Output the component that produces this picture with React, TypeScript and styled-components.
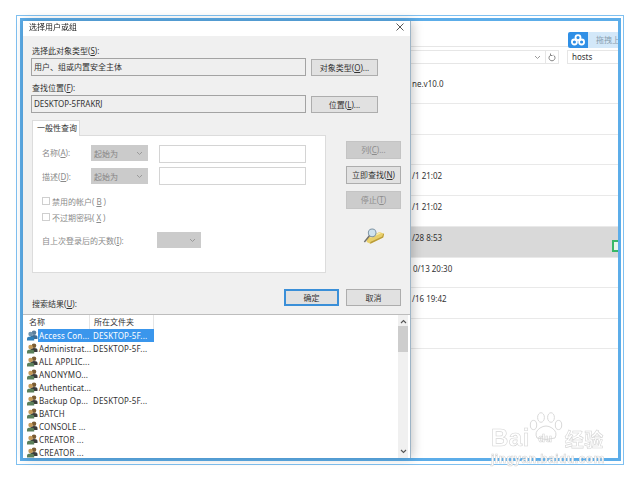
import styled, { createGlobalStyle } from "styled-components";

const GlobalStyle = createGlobalStyle`
  * { box-sizing: border-box; }
  html, body { margin: 0; background: #fff; }
  body {
    width: 640px;
    height: 480px;
    overflow: hidden;
    font-family: "Noto Sans", "Noto Sans CJK SC", sans-serif;
    font-size: 8px;
    color: #333;
  }
`;

const Page = styled.div`
  position: relative;
  width: 640px;
  height: 480px;
  padding: 15px 16px;
  filter: blur(0.4px);
`;
const OuterFrame = styled.div`
  width: 608px;
  height: 450px;
  padding: 2px 2px 3px 3px;
  border: 1px solid #7fc0f0;
`;
const InnerFrame = styled.div`
  display: flex;
  height: 100%;
  border: 3px solid #5cade9;
`;

const Dialog = styled.div`
  position: relative;
  z-index: 1;
  display: flex;
  flex-direction: column;
  flex: none;
  width: 388px;
  background: #fff;
  border-right: 1px solid #9db4c6;
  box-shadow: 2px 0 10px rgba(0, 0, 0, 0.22);
`;
const TitleBar = styled.div`
  display: flex;
  align-items: center;
  justify-content: space-between;
  height: 15px;
  padding: 0 6px 3px;
  line-height: 12px;
  color: #222;
`;
const DialogBody = styled.div`
  height: 278px;
  padding: 9px 0 0 8px;
  background: #f0f0f0;
`;
const FieldLabel = styled.div`
  height: 13px;
  padding-left: 1px;
  line-height: 12px;
`;
const FieldRow = styled.div`
  display: flex;
  align-items: flex-end;
  gap: 5px;
  margin-bottom: 6px;
`;
const Field = styled.div`
  width: 275px;
  height: 18px;
  padding: 1px 0 0 2px;
  line-height: 13px;
  background: #efefef;
  border: 1px solid #a3a3a3;
`;
const Btn = styled.div<{ $w: number; $off?: boolean; $primary?: boolean; $tall?: boolean }>`
  flex: none;
  width: ${(p) => p.$w}px;
  height: ${(p) => (p.$off || p.$tall ? 18 : 17)}px;
  line-height: ${(p) => (p.$primary ? 13 : 15)}px;
  text-align: center;
  color: ${(p) => (p.$off ? "#8c8c8c" : "#333")};
  background: ${(p) => (p.$off ? "#cccccc" : "#e1e1e1")};
  border: ${(p) => (p.$primary ? 2 : 1)}px solid
    ${(p) => (p.$primary ? "#3a8fd8" : p.$off ? "#c4c4c4" : "#adadad")};
`;

const QueryRow = styled.div`
  display: flex;
  gap: 20px;
  margin: 7px 0 0 1px;
`;
const Tab = styled.div`
  position: relative;
  z-index: 1;
  width: 48px;
  height: 16px;
  margin-bottom: -1px;
  padding-left: 4px;
  line-height: 13px;
  white-space: nowrap;
  background: #fff;
  border: 1px solid #dcdcdc;
  border-bottom: none;
`;
const Panel = styled.div`
  width: 294px;
  height: 138px;
  padding: 9px 0 0 9px;
  color: #8a8a8a;
  background: #fff;
  border: 1px solid #dcdcdc;
`;
const QueryLine = styled.div<{ $topAligned?: boolean }>`
  display: flex;
  align-items: ${(p) => (p.$topAligned ? "flex-start" : "center")};
  height: 18px;
  margin-bottom: 4px;
  line-height: ${(p) => (p.$topAligned ? "15px" : "normal")};
`;
const LineLabel = styled.span<{ $w: number }>`
  flex: none;
  width: ${(p) => p.$w}px;
`;
const Combo = styled.div<{ $w: number }>`
  display: flex;
  align-items: center;
  justify-content: space-between;
  flex: none;
  width: ${(p) => p.$w}px;
  height: 16px;
  padding: 0 5px 0 3px;
  color: #858585;
  background: #cbcbcb;
`;
const TextInput = styled.div`
  width: 147px;
  height: 18px;
  margin-left: 11px;
  background: #fff;
  border: 1px solid #d4d4d4;
`;
const CheckLine = styled.div<{ $top: number }>`
  display: flex;
  align-items: center;
  gap: 2px;
  height: 12px;
  margin-top: ${(p) => p.$top}px;
`;
const CheckBox = styled.span`
  width: 8px;
  height: 8px;
  background: #fff;
  border: 1px solid #cfcfcf;
`;
const DaysLine = styled(QueryLine)`
  height: 16px;
  margin-top: 9px;
`;
const SideButtons = styled.div`
  display: flex;
  flex-direction: column;
  align-items: center;
  gap: 7px;
  margin-top: 21px;
`;
const FindIcon = styled.svg`
  margin-top: 12px;
`;
const Actions = styled.div`
  display: flex;
  height: 22px;
  gap: 7px;
  margin-top: 16px;
  padding-right: 9px;
`;
const ResultsLabel = styled(FieldLabel)`
  align-self: flex-end;
  margin-right: auto;
`;

const Results = styled.div`
  position: relative;
  flex: 1;
  padding-left: 4px;
  overflow: hidden;
  background: #fff;
  border-top: 1px solid #bdbdbd;
`;
const ResultsHead = styled.div`
  display: flex;
  height: 14px;
  margin-left: -2px;
  line-height: 14px;
`;
const HeadCell = styled.div<{ $w: number }>`
  width: ${(p) => p.$w}px;
  padding-left: 4px;
  border-right: 1px solid #e5e5e5;
`;
const ResultRow = styled.div`
  display: flex;
  align-items: center;
  height: 13px;
  letter-spacing: 0.15px;
  white-space: nowrap;
`;
const RowCells = styled.div<{ $on?: boolean }>`
  display: flex;
  width: 116px;
  height: 13px;
  line-height: 13px;
  color: ${(p) => (p.$on ? "#fff" : "#333")};
  background: ${(p) => (p.$on ? "#3a96ec" : "transparent")};
`;
const NameCell = styled.span`
  width: 55px;
  padding-left: 1px;
`;
const ScrollBar = styled.div`
  position: absolute;
  top: 0;
  right: 2px;
  bottom: 0;
  display: flex;
  flex-direction: column;
  justify-content: space-between;
  align-items: center;
  width: 10px;
  padding: 4px 0;
  background: #f0f0f0;
`;
const Thumb = styled.div`
  position: absolute;
  top: 11px;
  left: 0;
  width: 10px;
  height: 26px;
  background: #cdcdcd;
`;

const Explorer = styled.div`
  flex: 1;
  background: #fff;
`;
const ExplorerTop = styled.div`
  display: flex;
  justify-content: flex-end;
  align-items: flex-end;
  height: 26px;
  border-bottom: 1px solid #e6e6e6;
`;
const CloudBadge = styled.div`
  position: relative;
  display: flex;
  width: 50px;
  height: 16px;
  margin-bottom: -2px;
`;
const CloudIcon = styled.div`
  display: flex;
  align-items: center;
  justify-content: center;
  width: 20px;
  background: #2f8fe6;
  border-radius: 2px 0 0 2px;
`;
const CloudText = styled.div`
  flex: 1;
  padding-left: 8px;
  overflow: hidden;
  line-height: 16px;
  white-space: nowrap;
  color: #8aa0b0;
  background: #d3e8f9;
`;
const AddressRow = styled.div`
  display: flex;
  height: 18px;
  padding-top: 3px;
  gap: 8px;
`;
const AddressBar = styled.div`
  display: flex;
  justify-content: flex-end;
  align-items: center;
  gap: 4px;
  width: 148px;
  height: 14px;
  border: 1px solid #e6e6e6;
  border-left: none;
`;
const AddressBtn = styled.span`
  display: flex;
  align-items: center;
  justify-content: center;
  width: 13px;
  height: 12px;
  border-left: 1px solid #e6e6e6;
`;
const SearchBox = styled.div`
  flex: 1;
  height: 14px;
  padding-left: 4px;
  line-height: 12px;
  border: 1px solid #e6e6e6;
  border-right: none;
`;
const FileRow = styled.div<{ $h: number; $on?: boolean; $indent?: number; $first?: boolean }>`
  display: flex;
  justify-content: space-between;
  height: ${(p) => p.$h}px;
  padding: ${(p) => (p.$first ? 12 : 4)}px 0 0 ${(p) => p.$indent ?? 1}px;
  line-height: 13px;
  background: ${(p) => (p.$on ? "#d9d9d9" : "#fff")};
  border-bottom: 1px solid #e9e9e9;
`;
const SheetBadge = styled.span`
  align-self: flex-end;
  width: 6px;
  height: 12px;
  margin-bottom: 5px;
  background: #e8f6ec;
  border: 2px solid #38b868;
  border-right: none;
`;

const Watermark = styled.div`
  position: absolute;
  left: 491px;
  top: 420px;
  width: 125px;
  color: #fff;
  -webkit-text-stroke: 0.6px #d5d5d5;
  font-family: "Liberation Sans", sans-serif;
`;
const MarkLine = styled.div`
  display: flex;
  align-items: center;
  height: 36px;
  font-size: 24px;
  font-weight: 700;
  letter-spacing: 0.5px;
`;
const MarkDu = styled.span`
  width: 31px;
  font-size: 11px;
  text-align: center;
`;
const MarkCn = styled.span`
  margin-left: 4px;
  font-family: "Noto Sans CJK SC", sans-serif;
  font-size: 19px;
`;
const MarkUrl = styled.div`
  margin-top: -4px;
  font-size: 12px;
  font-weight: 700;
  letter-spacing: 0.5px;
  white-space: nowrap;
`;
const Paw = styled.svg`
  position: absolute;
  left: 38px;
  top: -8px;
`;

const Chevron = () => (
  <svg width="7" height="5" viewBox="0 0 7 5" fill="none" stroke="#9a9a9a" strokeWidth="1">
    <path d="M1 1l2.5 2.5L6 1" />
  </svg>
);

const ScrollArrow = ({ up }: { up?: boolean }) => (
  <svg width="7" height="5" viewBox="0 0 7 5" fill="none" stroke="#555" strokeWidth="1.1">
    <path d={up ? "M1 4l2.5-2.5L6 4" : "M1 1l2.5 2.5L6 1"} />
  </svg>
);

const GroupIcon = ({ blue }: { blue?: boolean }) => (
  <svg width="11" height="11" viewBox="0 0 11 11" style={{ flex: "none" }}>
    <circle cx="7" cy="2.8" r="2.3" fill={blue ? "#5c7f9c" : "#7a5c34"} />
    <path d="M3.5 9V7q0-2 3.5-2t3.5 2v2z" fill={blue ? "#3f6d94" : "#3a3a3a"} />
    <circle cx="3.6" cy="4" r="2.3" fill={blue ? "#6f94b0" : "#c49a5a"} />
    <path d="M0 10.5V8.6q0-2.2 3.6-2.2t3.6 2.2v1.9z" fill={blue ? "#2f7fb8" : "#5b7f5a"} />
  </svg>
);

const rows = [
  { name: "Access Con...", folder: "DESKTOP-5F...", on: true },
  { name: "Administrat...", folder: "DESKTOP-5F..." },
  { name: "ALL APPLIC..." },
  { name: "ANONYMO..." },
  { name: "Authenticat..." },
  { name: "Backup Op...", folder: "DESKTOP-5F..." },
  { name: "BATCH" },
  { name: "CONSOLE ..." },
  { name: "CREATOR ..." },
  { name: "CREATOR ..." },
];

const files = [
  { h: 39, text: "ne.v10.0", first: true },
  { h: 31, text: "" },
  { h: 30, text: "" },
  { h: 31, text: "/1 21:02" },
  { h: 31, text: "/1 21:02" },
  { h: 31, text: "/28 8:53", on: true },
  { h: 30, text: "0/13 20:30", indent: 2 },
  { h: 31, text: "/16 19:42" },
  { h: 30, text: "" },
];

export default function App() {
  return (
    <Page>
      <GlobalStyle />
      <OuterFrame>
        <InnerFrame>
          <Dialog>
            <TitleBar>
              <span>选择用户或组</span>
              <svg width="8" height="8" viewBox="0 0 8 8" stroke="#444" strokeWidth="0.9">
                <path d="M0.5 0.5l7 7M7.5 0.5l-7 7" />
              </svg>
            </TitleBar>
            <DialogBody>
              <FieldLabel>选择此对象类型(<u>S</u>):</FieldLabel>
              <FieldRow>
                <Field>用户、组或内置安全主体</Field>
                <Btn $w={67}>对象类型(<u>O</u>)...</Btn>
              </FieldRow>
              <FieldLabel>查找位置(<u>F</u>):</FieldLabel>
              <FieldRow>
                <Field>DESKTOP-5FRAKRJ</Field>
                <Btn $w={67}>位置(<u>L</u>)...</Btn>
              </FieldRow>
              <QueryRow>
                <div>
                  <Tab>一般性查询</Tab>
                  <Panel>
                    <QueryLine $topAligned>
                      <LineLabel $w={49}>名称(<u>A</u>):</LineLabel>
                      <Combo $w={57}>起始为<Chevron /></Combo>
                      <TextInput />
                    </QueryLine>
                    <QueryLine>
                      <LineLabel $w={49}>描述(<u>D</u>):</LineLabel>
                      <Combo $w={57}>起始为<Chevron /></Combo>
                      <TextInput />
                    </QueryLine>
                    <CheckLine $top={10}><CheckBox />禁用的帐户(<u>B</u>)</CheckLine>
                    <CheckLine $top={4}><CheckBox />不过期密码(<u>X</u>)</CheckLine>
                    <DaysLine>
                      <LineLabel $w={115}>自上次登录后的天数(<u>I</u>):</LineLabel>
                      <Combo $w={44}><span /><Chevron /></Combo>
                    </DaysLine>
                  </Panel>
                </div>
                <SideButtons>
                  <Btn $w={55} $off>列(<u>C</u>)...</Btn>
                  <Btn $w={55} $tall>立即查找(<u>N</u>)</Btn>
                  <Btn $w={55} $off>停止(<u>T</u>)</Btn>
                  <FindIcon width="22" height="17" viewBox="0 0 24 18">
                    <path d="M4 11l14-7 5 2-1 4-14 7-4-2z" fill="#e8cf6a" />
                    <path d="M8 17l14-7 1-4-1 0-1 3-13 6z" fill="#b89a3a" />
                    <path d="M8 10l11-5" stroke="#f7eaa8" strokeWidth="1.5" />
                    <circle cx="10" cy="5" r="4.2" fill="#cfe3ee" stroke="#7d93a3" strokeWidth="1.1" />
                    <path d="M7 8.2L1.5 15" stroke="#6f6f6f" strokeWidth="1.5" />
                  </FindIcon>
                </SideButtons>
              </QueryRow>
              <Actions>
                <ResultsLabel>搜索结果(<u>U</u>):</ResultsLabel>
                <Btn $w={55} $primary>确定</Btn>
                <Btn $w={55}>取消</Btn>
              </Actions>
            </DialogBody>
            <Results>
              <ResultsHead>
                <HeadCell $w={65}>名称</HeadCell>
                <HeadCell $w={64}>所在文件夹</HeadCell>
              </ResultsHead>
              {rows.map((row, i) => (
                <ResultRow key={i}>
                  <GroupIcon blue={row.on} />
                  <RowCells $on={row.on}>
                    <NameCell>{row.name}</NameCell>
                    <span>{row.folder}</span>
                  </RowCells>
                </ResultRow>
              ))}
              <ScrollBar>
                <ScrollArrow up />
                <Thumb />
                <ScrollArrow />
              </ScrollBar>
            </Results>
          </Dialog>
          <Explorer>
            <ExplorerTop>
              <CloudBadge>
                <CloudIcon>
                  <svg width="14" height="12" viewBox="0 0 14 12" fill="none" stroke="#fff" strokeWidth="1.8">
                    <circle cx="7" cy="3.6" r="2.5" />
                    <circle cx="3.4" cy="8" r="2.5" />
                    <circle cx="10.6" cy="8" r="2.5" />
                  </svg>
                </CloudIcon>
                <CloudText>拖拽上</CloudText>
              </CloudBadge>
            </ExplorerTop>
            <AddressRow>
              <AddressBar>
                <Chevron />
                <AddressBtn>
                  <svg width="8" height="9" viewBox="0 0 8 9" fill="none" stroke="#777" strokeWidth="0.9">
                    <path d="M5.5 2.2a3 3 0 1 1-3 0M2.5 0.5v2h2" />
                  </svg>
                </AddressBtn>
              </AddressBar>
              <SearchBox>hosts</SearchBox>
            </AddressRow>
            {files.map((file, i) => (
              <FileRow key={i} $h={file.h} $on={file.on} $indent={file.indent} $first={file.first}>
                <span>{file.text}</span>
                {file.on && <SheetBadge />}
              </FileRow>
            ))}
          </Explorer>
        </InnerFrame>
      </OuterFrame>
      <Watermark>
        <Paw width="34" height="28" viewBox="0 0 34 28" fill="none" stroke="#d5d5d5" strokeWidth="0.9">
          <ellipse cx="4.5" cy="13" rx="3.2" ry="4.6" />
          <ellipse cx="12" cy="5.5" rx="3.4" ry="4.8" />
          <ellipse cx="22" cy="5.5" rx="3.4" ry="4.8" />
          <ellipse cx="29.5" cy="13" rx="3.2" ry="4.6" />
          <path d="M8 26q-3-6 3-10 6-4 12 0 6 4 3 10-9 3-18 0z" />
        </Paw>
        <MarkLine>Bai<MarkDu>du</MarkDu><MarkCn>经验</MarkCn></MarkLine>
        <MarkUrl>jingyan.baidu.com</MarkUrl>
      </Watermark>
    </Page>
  );
}
